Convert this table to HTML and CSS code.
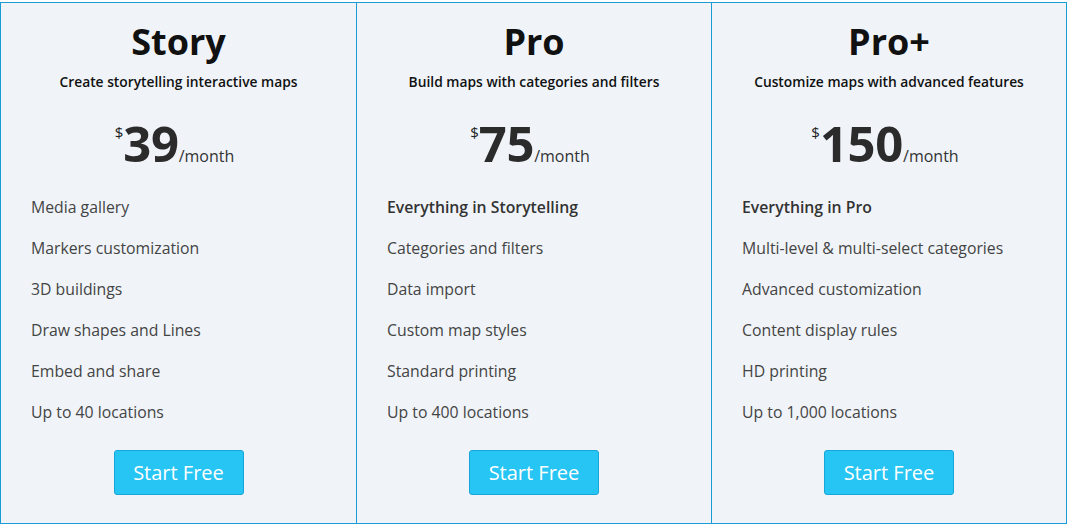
FILE: index.html
```html
<!DOCTYPE html>
<html lang="en">
<head>
<meta charset="utf-8">
<title>Pricing</title>
<link rel="stylesheet" href="styles.css">
</head>
<body>
<div class="pricing">
  <section class="plan">
    <h2 class="plan-name">Story</h2>
    <p class="plan-desc">Create storytelling interactive maps</p>
    <div class="price"><span class="cur">$</span><span class="amount">39</span><span class="per">/month</span></div>
    <ul class="features">
      <li>Media gallery</li>
      <li>Markers customization</li>
      <li>3D buildings</li>
      <li>Draw shapes and Lines</li>
      <li>Embed and share</li>
      <li>Up to 40 locations</li>
    </ul>
    <div class="cta"><a class="btn" href="#">Start Free</a></div>
  </section>
  <section class="plan">
    <h2 class="plan-name">Pro</h2>
    <p class="plan-desc">Build maps with categories and filters</p>
    <div class="price"><span class="cur">$</span><span class="amount">75</span><span class="per">/month</span></div>
    <ul class="features">
      <li class="strong">Everything in Storytelling</li>
      <li>Categories and filters</li>
      <li>Data import</li>
      <li>Custom map styles</li>
      <li>Standard printing</li>
      <li>Up to 400 locations</li>
    </ul>
    <div class="cta"><a class="btn" href="#">Start Free</a></div>
  </section>
  <section class="plan">
    <h2 class="plan-name">Pro+</h2>
    <p class="plan-desc">Customize maps with advanced features</p>
    <div class="price"><span class="cur">$</span><span class="amount">150</span><span class="per">/month</span></div>
    <ul class="features">
      <li class="strong">Everything in Pro</li>
      <li>Multi-level &amp; multi-select categories</li>
      <li>Advanced customization</li>
      <li>Content display rules</li>
      <li>HD printing</li>
      <li>Up to 1,000 locations</li>
    </ul>
    <div class="cta"><a class="btn" href="#">Start Free</a></div>
  </section>
</div>
</body>
</html>
```

FILE: styles.css
```css
html, body {
  margin: 0;
  padding: 0;
  background: #ffffff;
}

body {
  font-family: "Open Sans", "Liberation Sans", sans-serif;
  color: #333;
  padding-top: 2px;
}

.pricing {
  width: 1067px;
  height: 522px;
  box-sizing: border-box;
  border: 1px solid #1a9cd2;
  border-right: none;
  display: grid;
  grid-template-columns: 356px 355px 355px;
  background: #f0f4f9;
}

.plan {
  border-right: 1px solid #1a9cd2;
  display: flex;
  flex-direction: column;
  padding: 17px 0 0 0;
}

.plan-name {
  margin: 0;
  text-align: center;
  font-size: 36px;
  line-height: 43px;
  font-weight: 700;
  color: #111;
}

.plan-desc {
  margin: 9px 0 0;
  text-align: center;
  font-size: 13.8px;
  line-height: 20px;
  font-weight: 600;
  color: #111;
}

.price {
  margin-top: 26px;
  padding-right: 8px;
  display: flex;
  justify-content: center;
  align-items: baseline;
  height: 50px;
}

.cur {
  font-size: 15px;
  line-height: 1;
  align-self: flex-start;
  margin-top: 7px;
  color: #222;
}

.amount {
  font-size: 49px;
  line-height: 50px;
  font-weight: 700;
  color: #2b2b2b;
  letter-spacing: -0.3px;
}

.per {
  font-size: 16px;
  color: #333;
}

.features {
  list-style: none;
  margin: 19px 0 0;
  padding: 0 0 0 30px;
}

.features li {
  font-size: 15.8px;
  line-height: 41px;
  height: 41px;
  color: #444;
}

.features li.strong {
  font-weight: 600;
  color: #333;
}

.cta {
  margin-top: 17px;
  display: flex;
  justify-content: center;
}

.btn {
  display: flex;
  align-items: center;
  justify-content: center;
  width: 130px;
  height: 45px;
  box-sizing: border-box;
  background: #27c5f3;
  border: 1px solid #16a6dc;
  border-radius: 3px;
  color: #fff;
  font-size: 20px;
  text-decoration: none;
}
```
